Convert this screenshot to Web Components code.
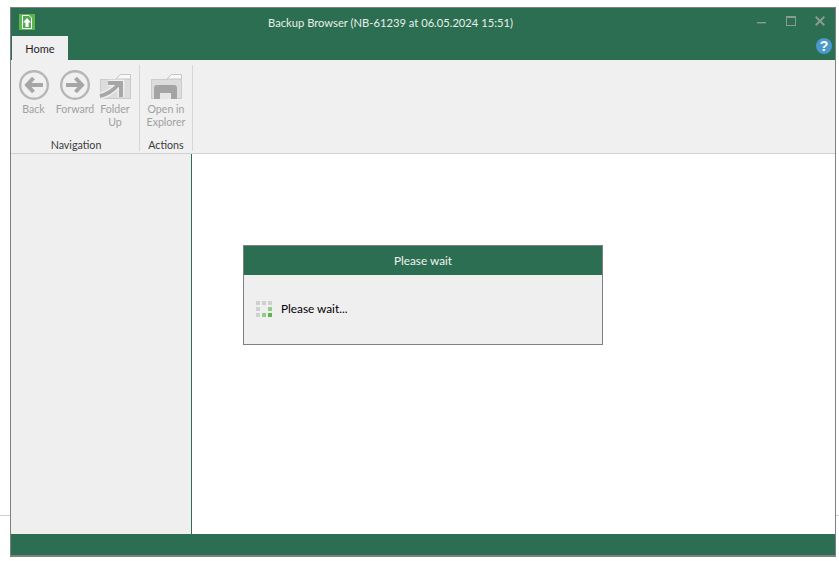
<!DOCTYPE html>
<html>
<head>
<meta charset="utf-8">
<title>Backup Browser</title>
<style>
  html, body { margin: 0; height: 100%; background: #fff; overflow: hidden; }
  body { font: 12px Lato, "Liberation Sans", sans-serif; }
</style>
</head>
<body>
<backup-window>
  <title-bar slot="title" caption="Backup Browser (NB-61239 at 06.05.2024 15:51)"></title-bar>
  <ribbon-bar slot="ribbon">
    <ribbon-group label="Navigation" pad="5">
      <ribbon-button width="41" icon="back">Back</ribbon-button>
      <ribbon-button width="42" icon="forward">Forward</ribbon-button>
      <ribbon-button width="38" icon="up">Folder<br>Up</ribbon-button>
    </ribbon-group>
    <ribbon-group label="Actions">
      <ribbon-button width="52" icon="explorer">Open in<br>Explorer</ribbon-button>
    </ribbon-group>
  </ribbon-bar>
  <wait-dialog slot="content" heading="Please wait">Please wait...</wait-dialog>
</backup-window>

<script>
const GREEN = '#2c6e51';

class BackupWindow extends HTMLElement {
  constructor() {
    super();
    this.attachShadow({ mode: 'open' });
    this.shadowRoot.innerHTML = `
      <style>
        :host {
          display: block;
          box-sizing: border-box;
          width: 839px;
          height: 561px;
          padding: 7px 3px 4px 10px;
          /* the faint desktop line behind the window */
          background: linear-gradient(#cfcfcf, #cfcfcf) 0 515px / 100% 1px no-repeat;
        }
        .frame {
          box-sizing: border-box;
          height: 100%;
          display: flex;
          flex-direction: column;
          border: 1px solid #808080;
          border-bottom-width: 2px;
          background: #fff;
        }
        .main { flex: 1; display: flex; min-height: 0; }
        .tree {
          width: 180px;
          background: #efefef;
          border-right: 1px solid ${GREEN};
        }
        .content { flex: 1; padding: 91px 0 0 51px; }
        .status { height: 21px; background: ${GREEN}; }
      </style>
      <div class="frame">
        <slot name="title"></slot>
        <slot name="ribbon"></slot>
        <div class="main">
          <div class="tree"></div>
          <div class="content"><slot name="content"></slot></div>
        </div>
        <div class="status"></div>
      </div>
    `;
  }
}

class TitleBar extends HTMLElement {
  constructor() {
    super();
    this.attachShadow({ mode: 'open' });
  }

  connectedCallback() {
    const caption = this.getAttribute('caption') || '';
    this.shadowRoot.innerHTML = `
      <style>
        :host {
          display: block;
          background: ${GREEN};
          color: #e8eeea;
          font: 11.2px Lato, "Liberation Sans", sans-serif;
        }
        .top {
          height: 28px;
          display: flex;
          align-items: center;
          padding-left: 8px;
        }
        .logo { width: 16px; height: 16px; flex: none; margin-top: -1px; }
        .caption { flex: 1; text-align: center; padding-right: 11px; white-space: nowrap; }
        .ctl { display: flex; gap: 19px; padding-right: 10px; flex: none; margin-top: -2px; }
        .ctl svg { width: 10px; height: 10px; display: block; }
        .tabs {
          height: 24px;
          display: flex;
          align-items: center;
          justify-content: space-between;
          padding: 0 3px 0 1px;
        }
        .tab {
          box-sizing: border-box;
          width: 56px;
          height: 24px;
          background: #f0f0f0;
          color: #1f1f1f;
          font-size: 11px;
          text-align: center;
          line-height: 26px;
        }
        .help { width: 16px; height: 16px; display: block; margin-bottom: 4px; }
      </style>
      <div class="top">
        <svg class="logo" viewBox="0 0 16 16">
          <rect width="16" height="16" fill="#5cb648"/>
          <path d="M3.5 1.5H10L12.5 4v10.5h-9z" fill="#4fa657" stroke="#fff"/>
          <path d="M8 4L12 8.5H9.6V13H6.4V8.5H4z" fill="#fff"/>
        </svg>
        <div class="caption">${caption}</div>
        <div class="ctl">
          <svg viewBox="0 0 10 10"><rect y="6" width="9" height="1.4" fill="#8b9a92"/></svg>
          <svg viewBox="0 0 10 10"><rect x=".5" y=".5" width="9" height="9" fill="none" stroke="#8b9a92"/><rect width="10" height="2" fill="#8b9a92"/></svg>
          <svg viewBox="0 0 10 10"><path d="M.7.7l8.6 8.6M9.3.7L.7 9.3" stroke="#8b9a92" stroke-width="2"/></svg>
        </div>
      </div>
      <div class="tabs">
        <div class="tab">Home</div>
        <svg class="help" viewBox="0 0 16 16">
          <circle cx="8" cy="8" r="8" fill="#4a98cc"/>
          <text x="8" y="13" text-anchor="middle" fill="#fff" font-family="Liberation Sans" font-weight="700" font-size="14">?</text>
        </svg>
      </div>
    `;
  }
}

class RibbonBar extends HTMLElement {
  constructor() {
    super();
    this.attachShadow({ mode: 'open' });
    this.shadowRoot.innerHTML = `
      <style>
        :host {
          display: flex;
          box-sizing: border-box;
          height: 94px;
          padding: 5px 0 0 2px;
          background: #f0f0f0;
          border-bottom: 1px solid #d2d2d2;
        }
      </style>
      <slot></slot>
    `;
  }
}

class RibbonGroup extends HTMLElement {
  constructor() {
    super();
    this.attachShadow({ mode: 'open' });
  }

  connectedCallback() {
    const pad = this.getAttribute('pad') || 0;
    this.shadowRoot.innerHTML = `
      <style>
        :host {
          display: flex;
          flex-direction: column;
          padding-right: ${pad}px;
          margin-bottom: 2px;
          border-right: 1px solid #d6d6d6;
        }
        .buttons { flex: 1; display: flex; }
        .label {
          margin: 0 ${-pad}px -2px 0;
          text-align: center;
          color: #3c3c3c;
          font: 10.7px/16px Lato, "Liberation Sans", sans-serif;
        }
      </style>
      <div class="buttons"><slot></slot></div>
      <div class="label">${this.getAttribute('label')}</div>
    `;
  }
}

const FOLDER = `<path d="M1 10h16l4-4.5h11V30H1z" fill="#dcdcdc"/>
      <path d="M1.5 10.5h16M1.5 10.5V29.5H31.5V6" fill="none" stroke="#cbcbcb"/>
      <path d="M17 10l4.3-4.5h10.2V10z" fill="#f8f8f8" stroke="#c6c6c6"/>`;

const RIBBON_ICONS = {
  back: `<svg width="32" height="32" viewBox="0 0 32 32">
      <circle cx="16" cy="16" r="13.8" fill="none" stroke="#b6b6b6" stroke-width="2.4"/>
      <path d="M15.5 9L9 16l6.5 7M10 16h15" fill="none" stroke="#a6a6a6" stroke-width="4"/></svg>`,
  forward: `<svg width="32" height="32" viewBox="0 0 32 32">
      <circle cx="16" cy="16" r="13.8" fill="none" stroke="#b6b6b6" stroke-width="2.4"/>
      <path d="M16.5 9L23 16l-6.5 7M22 16H7" fill="none" stroke="#a6a6a6" stroke-width="4"/></svg>`,
  up: `<svg width="32" height="32" viewBox="0 0 32 32">
      ${FOLDER}
      <path d="M1 27q10-2 19-12M9 14h13v14" fill="none" stroke="#f0f0f0" stroke-width="6.5"/>
      <path d="M1 27q10-2 19-12M9 14h13v14" fill="none" stroke="#a6a6a6" stroke-width="4"/></svg>`,
  explorer: `<svg width="32" height="32" viewBox="0 0 32 32">
      ${FOLDER}
      <path d="M4 30V19q0-3 3-3h17q3 0 3 3v11h-6v-6H10v6z" fill="#a4a4a4"/>
      <rect x="10" y="24" width="11" height="6" fill="#e6e6e6"/></svg>`
};

class RibbonButton extends HTMLElement {
  constructor() {
    super();
    this.attachShadow({ mode: 'open' });
  }

  connectedCallback() {
    const width = this.getAttribute('width') || 40;
    this.shadowRoot.innerHTML = `
      <style>
        :host {
          display: flex;
          flex-direction: column;
          align-items: center;
          width: ${width}px;
          color: #a0a0a0;
          font: 10.6px/13px Lato, "Liberation Sans", sans-serif;
          text-align: center;
        }
        .icon { height: 32px; margin: 4px 0 2px; }
        svg { display: block; }
      </style>
      <div class="icon">${RIBBON_ICONS[this.getAttribute('icon')] || ''}</div>
      <div><slot></slot></div>
    `;
  }
}

class WaitSpinner extends HTMLElement {
  constructor() {
    super();
    this.attachShadow({ mode: 'open' });
    const colors = ['#d0d0d0', '#d0d0d0', '#d0d0d0', '#d0d0d0', 'transparent', '#94cb8a', '#d0d0d0', '#94cb8a', '#5cb84a'];
    this.shadowRoot.innerHTML = `
      <style>
        :host {
          display: grid;
          grid-template-columns: repeat(3, 4px);
          grid-auto-rows: 4px;
          gap: 2px;
        }
      </style>
      ${colors.map(c => `<i style="background:${c}"></i>`).join('')}
    `;
  }
}

class WaitDialog extends HTMLElement {
  constructor() {
    super();
    this.attachShadow({ mode: 'open' });
  }

  connectedCallback() {
    this.shadowRoot.innerHTML = `
      <style>
        :host {
          display: block;
          box-sizing: border-box;
          width: 360px;
          height: 100px;
          border: 1px solid #808080;
          background: #efefef;
          font: 11.8px/16px Lato, "Liberation Sans", sans-serif;
        }
        .head {
          height: 29px;
          line-height: 30px;
          background: ${GREEN};
          color: #f2f2f2;
          text-align: center;
        }
        .body {
          display: flex;
          align-items: center;
          gap: 9px;
          padding: 26px 0 0 12px;
          color: #000;
        }
      </style>
      <div class="head">${this.getAttribute('heading')}</div>
      <div class="body">
        <wait-spinner></wait-spinner>
        <span><slot></slot></span>
      </div>
    `;
  }
}

customElements.define('backup-window', BackupWindow);
customElements.define('title-bar', TitleBar);
customElements.define('ribbon-bar', RibbonBar);
customElements.define('ribbon-group', RibbonGroup);
customElements.define('ribbon-button', RibbonButton);
customElements.define('wait-spinner', WaitSpinner);
customElements.define('wait-dialog', WaitDialog);
</script>
</body>
</html>
